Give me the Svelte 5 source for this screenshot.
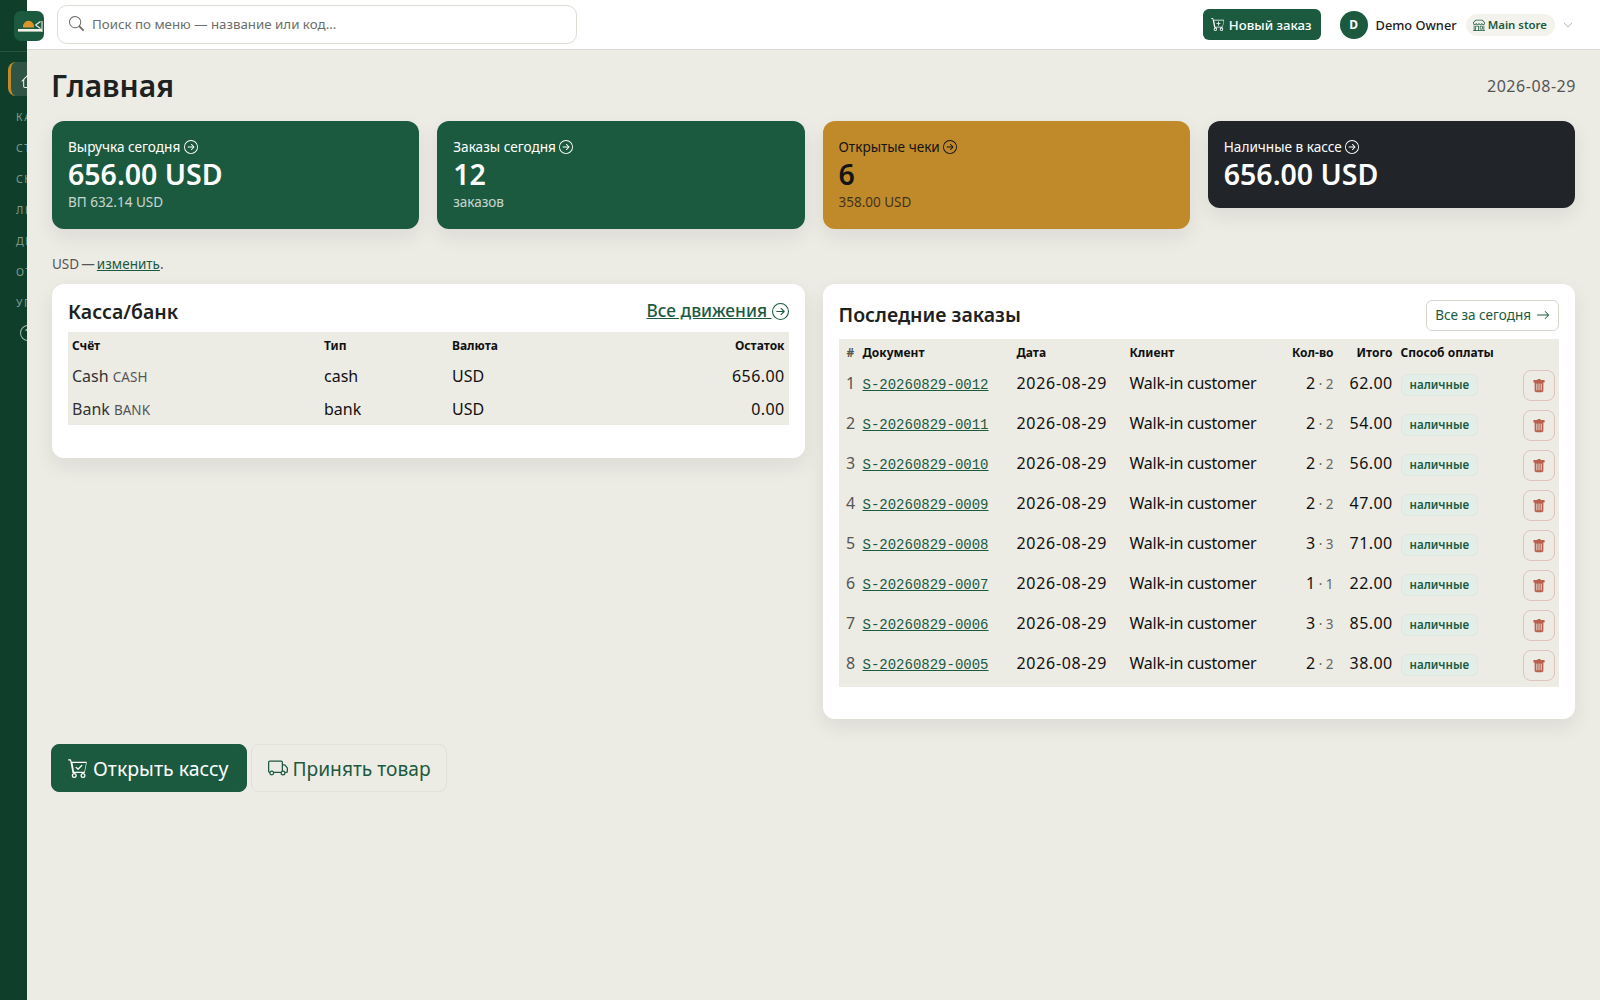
<script>
  const icons = {
    circleArrow: "M1 8a7 7 0 1 0 14 0A7 7 0 0 0 1 8m15 0A8 8 0 1 1 0 8a8 8 0 0 1 16 0M4.5 7.5a.5.5 0 0 0 0 1h5.793l-2.147 2.146a.5.5 0 0 0 .708.708l3-3a.5.5 0 0 0 0-.708l-3-3a.5.5 0 1 0-.708.708L10.293 7.5z",
    search: "M11.742 10.344a6.5 6.5 0 1 0-1.397 1.398h-.001q.044.06.098.115l3.85 3.85a1 1 0 0 0 1.415-1.414l-3.85-3.85a1 1 0 0 0-.115-.1zM12 6.5a5.5 5.5 0 1 1-11 0 5.5 5.5 0 0 1 11 0",
    cartPlus: "M9 5.5a.5.5 0 0 0-1 0V7H6.5a.5.5 0 0 0 0 1H8v1.5a.5.5 0 0 0 1 0V8h1.5a.5.5 0 0 0 0-1H9zM.5 1a.5.5 0 0 0 0 1h1.11l.401 1.607 1.498 7.985A.5.5 0 0 0 4 12h1a2 2 0 1 0 0 4 2 2 0 0 0 0-4h7a2 2 0 1 0 0 4 2 2 0 0 0 0-4h1a.5.5 0 0 0 .491-.408l1.5-8A.5.5 0 0 0 14.5 3H2.89l-.405-1.621A.5.5 0 0 0 2 1zm3.102 3h10.796l-1.313 7h-8.17zM5 13a1 1 0 1 1 0 2 1 1 0 0 1 0-2m7 0a1 1 0 1 1 0 2 1 1 0 0 1 0-2",
    cartCheck: "M11.354 6.354a.5.5 0 0 0-.708-.708L8 8.293 6.854 7.146a.5.5 0 1 0-.708.708l1.5 1.5a.5.5 0 0 0 .708 0zM.5 1a.5.5 0 0 0 0 1h1.11l.401 1.607 1.498 7.985A.5.5 0 0 0 4 12h1a2 2 0 1 0 0 4 2 2 0 0 0 0-4h7a2 2 0 1 0 0 4 2 2 0 0 0 0-4h1a.5.5 0 0 0 .491-.408l1.5-8A.5.5 0 0 0 14.5 3H2.89l-.405-1.621A.5.5 0 0 0 2 1zm3.102 3h10.796l-1.313 7h-8.17zM5 13a1 1 0 1 1 0 2 1 1 0 0 1 0-2m7 0a1 1 0 1 1 0 2 1 1 0 0 1 0-2",
    truck: "M0 3.5A1.5 1.5 0 0 1 1.5 2h9A1.5 1.5 0 0 1 12 3.5V5h1.02a1.5 1.5 0 0 1 1.17.563l1.481 1.85a1.5 1.5 0 0 1 .329.938V10.5a1.5 1.5 0 0 1-1.5 1.5H14a2 2 0 1 1-4 0H5a2 2 0 1 1-3.998-.085A1.5 1.5 0 0 1 0 10.5zm1.294 7.456A2 2 0 0 1 4.732 11h5.536a2 2 0 0 1 .732-.732V3.5a.5.5 0 0 0-.5-.5h-9a.5.5 0 0 0-.5.5v7a.5.5 0 0 0 .294.456M12 10a2 2 0 0 1 1.732 1h.768a.5.5 0 0 0 .5-.5V8.35a.5.5 0 0 0-.11-.312l-1.48-1.85A.5.5 0 0 0 13.02 6H12zm-9 1a1 1 0 1 0 0 2 1 1 0 0 0 0-2m9 0a1 1 0 1 0 0 2 1 1 0 0 0 0-2",
    trash: "M2.5 1a1 1 0 0 0-1 1v1a1 1 0 0 0 1 1H3v9a2 2 0 0 0 2 2h6a2 2 0 0 0 2-2V4h.5a1 1 0 0 0 1-1V2a1 1 0 0 0-1-1H10a1 1 0 0 0-1-1H7a1 1 0 0 0-1 1zm3 4a.5.5 0 0 1 .5.5v7a.5.5 0 0 1-1 0v-7a.5.5 0 0 1 .5-.5M8 5a.5.5 0 0 1 .5.5v7a.5.5 0 0 1-1 0v-7A.5.5 0 0 1 8 5m3 .5v7a.5.5 0 0 1-1 0v-7a.5.5 0 0 1 1 0",
    chevron: "M1.646 4.646a.5.5 0 0 1 .708 0L8 10.293l5.646-5.647a.5.5 0 0 1 .708.708l-6 6a.5.5 0 0 1-.708 0l-6-6a.5.5 0 0 1 0-.708",
    house: "M8.707 1.5a1 1 0 0 0-1.414 0L.646 8.146a.5.5 0 0 0 .708.708L2 8.207V13.5A1.5 1.5 0 0 0 3.5 15h9a1.5 1.5 0 0 0 1.5-1.5V8.207l.646.647a.5.5 0 0 0 .708-.708L13 5.793V2.5a.5.5 0 0 0-.5-.5h-1a.5.5 0 0 0-.5.5v1.293zM13 7.207V13.5a.5.5 0 0 1-.5.5h-9a.5.5 0 0 1-.5-.5V7.207l5-5z",
    question: "M8 15A7 7 0 1 1 8 1a7 7 0 0 1 0 14m0 1A8 8 0 1 0 8 0a8 8 0 0 0 0 16M5.255 5.786a.237.237 0 0 0 .241.247h.825c.138 0 .248-.113.266-.25.09-.656.54-1.134 1.342-1.134.686 0 1.314.343 1.314 1.168 0 .635-.374.927-.965 1.371-.673.489-1.206 1.06-1.168 1.987l.003.217a.25.25 0 0 0 .25.246h.811a.25.25 0 0 0 .25-.25v-.105c0-.718.273-.927 1.01-1.486.609-.463 1.244-.977 1.244-2.056 0-1.511-1.276-2.241-2.673-2.241-1.267 0-2.655.59-2.75 2.286m1.557 5.763c0 .533.425.927 1.01.927.609 0 1.028-.394 1.028-.927 0-.552-.42-.94-1.029-.94-.584 0-1.009.388-1.009.94",
    shop: "M2.97 1.35A1 1 0 0 1 3.73 1h8.54a1 1 0 0 1 .76.35l2.609 3.044A1.5 1.5 0 0 1 16 5.37v.255a2.375 2.375 0 0 1-4.25 1.458A2.37 2.37 0 0 1 9.875 8 2.37 2.37 0 0 1 8 7.083 2.37 2.37 0 0 1 6.125 8a2.37 2.37 0 0 1-1.875-.917A2.375 2.375 0 0 1 0 5.625V5.37a1.5 1.5 0 0 1 .361-.976zm1.78 4.275a1.375 1.375 0 0 0 2.75 0 .5.5 0 0 1 1 0 1.375 1.375 0 0 0 2.75 0 .5.5 0 0 1 1 0 1.375 1.375 0 1 0 2.75 0V5.37a.5.5 0 0 0-.12-.325L12.27 2H3.73L1.12 5.045A.5.5 0 0 0 1 5.37v.255a1.375 1.375 0 0 0 2.75 0 .5.5 0 0 1 1 0M1.5 8.5A.5.5 0 0 1 2 9v6h1v-5a1 1 0 0 1 1-1h3a1 1 0 0 1 1 1v5h6V9a.5.5 0 0 1 1 0v6h.5a.5.5 0 0 1 0 1H.5a.5.5 0 0 1 0-1H1V9a.5.5 0 0 1 .5-.5M4 15h3v-5H4zm5-5a1 1 0 0 1 1-1h2a1 1 0 0 1 1 1v3a1 1 0 0 1-1 1h-2a1 1 0 0 1-1-1zm3 0h-2v3h2z",
    arrow: "M1 8a.5.5 0 0 1 .5-.5h11.793l-3.147-3.146a.5.5 0 0 1 .708-.708l4 4a.5.5 0 0 1 0 .708l-4 4a.5.5 0 0 1-.708-.708L13.293 8.5H1.5A.5.5 0 0 1 1 8"
  };

  const navGroups = ["КА", "СТ", "СК", "ЛЮ", "ДЕ", "ОТ", "УП"];

  const stats = [
    { label: "Выручка сегодня", value: "656.00 USD", sub: "ВП 632.14 USD", tone: "green" },
    { label: "Заказы сегодня", value: "12", sub: "заказов", tone: "green" },
    { label: "Открытые чеки", value: "6", sub: "358.00 USD", tone: "amber" },
    { label: "Наличные в кассе", value: "656.00 USD", sub: "", tone: "dark" }
  ];

  const accounts = [
    { name: "Cash", code: "CASH", type: "cash", currency: "USD", balance: "656.00" },
    { name: "Bank", code: "BANK", type: "bank", currency: "USD", balance: "0.00" }
  ];

  const orders = [
    { doc: "S-20260829-0012", qty: 2, lines: 2, total: "62.00" },
    { doc: "S-20260829-0011", qty: 2, lines: 2, total: "54.00" },
    { doc: "S-20260829-0010", qty: 2, lines: 2, total: "56.00" },
    { doc: "S-20260829-0009", qty: 2, lines: 2, total: "47.00" },
    { doc: "S-20260829-0008", qty: 3, lines: 3, total: "71.00" },
    { doc: "S-20260829-0007", qty: 1, lines: 1, total: "22.00" },
    { doc: "S-20260829-0006", qty: 3, lines: 3, total: "85.00" },
    { doc: "S-20260829-0005", qty: 2, lines: 2, total: "38.00" }
  ];
</script>

{#snippet icon(d, size)}
  <svg class="icon" width={size} height={size} viewBox="0 0 16 16" fill="currentColor"><path {d} /></svg>
{/snippet}

<div class="app">
  <aside class="sidebar">
    <div class="side-top"></div>
    <nav class="nav">
      <div class="nav-active">{@render icon(icons.house, 17)}</div>
      {#each navGroups as group}
        <div class="nav-group">{group}</div>
      {/each}
      <div class="nav-help">{@render icon(icons.question, 16)}</div>
    </nav>
  </aside>

  <!-- logo sits over the sidebar edge -->
  <div class="logo">
    <svg width="30" height="30" viewBox="0 0 30 30">
      <path d="M9 16.5a5.6 5.6 0 1 1 11 0z" fill="#d9962f" />
      <rect x="4" y="18" width="24" height="2.6" fill="#f4f1e6" />
      <path d="M21.5 14 L26.5 10.5 M21.5 14 L26.5 17.5 M28 10 V21" fill="none" stroke="#f4f1e6" stroke-width="1.1" />
    </svg>
  </div>

  <div class="main">
    <header class="topbar">
      <div class="search">
        <span class="search-icon">{@render icon(icons.search, 15)}</span>
        <span class="search-text">Поиск по меню — название или код...</span>
      </div>
      <div class="top-right">
        <button class="btn-new">{@render icon(icons.cartPlus, 14)} Новый заказ</button>
        <span class="avatar">D</span>
        <span class="user">Demo Owner</span>
        <span class="store">{@render icon(icons.shop, 12)} Main store</span>
        <span class="chev">{@render icon(icons.chevron, 10)}</span>
      </div>
    </header>

    <main class="content">
      <div class="title-row">
        <h1>Главная</h1>
        <span class="date">2026-08-29</span>
      </div>

      <section class="stats">
        {#each stats as s}
          <div class="stat {s.tone}">
            <div class="stat-label">{s.label} {@render icon(icons.circleArrow, 14)}</div>
            <div class="stat-value">{s.value}</div>
            {#if s.sub}<div class="stat-sub">{s.sub}</div>{/if}
          </div>
        {/each}
      </section>

      <p class="currency">USD — <a href="#top">изменить</a>.</p>

      <section class="panels">
        <div class="panel left">
          <div class="panel-head">
            <h2>Касса/банк</h2>
            <a class="all-link" href="#top"><u>Все движения&nbsp;</u>{@render icon(icons.circleArrow, 17)}</a>
          </div>
          <table class="accounts">
            <thead>
              <tr><th class="c1">Счёт</th><th class="c2">Тип</th><th>Валюта</th><th class="num">Остаток</th></tr>
            </thead>
            <tbody>
              {#each accounts as a}
                <tr>
                  <td class="acc">{a.name} <small>{a.code}</small></td>
                  <td>{a.type}</td>
                  <td>{a.currency}</td>
                  <td class="num figures">{a.balance}</td>
                </tr>
              {/each}
            </tbody>
          </table>
        </div>

        <div class="panel right">
          <div class="panel-head second">
            <h2>Последние заказы</h2>
            <a class="btn-outline" href="#top">Все за сегодня {@render icon(icons.arrow, 14)}</a>
          </div>
          <table class="orders">
            <thead>
              <tr>
                <th class="idx">#</th>
                <th class="doc">Документ</th>
                <th class="dt">Дата</th>
                <th class="cust">Клиент</th>
                <th class="num qty">Кол-во</th>
                <th class="num tot">Итого</th>
                <th class="pay">Способ оплаты</th>
                <th></th>
              </tr>
            </thead>
            <tbody>
              {#each orders as o, i}
                <tr>
                  <td class="idx">{i + 1}</td>
                  <td><a class="doc-link" href="#top">{o.doc}</a></td>
                  <td class="figures wide">2026-08-29</td>
                  <td class="customer">Walk-in customer</td>
                  <td class="num">{o.qty}<span class="lines">&nbsp;· {o.lines}</span></td>
                  <td class="num figures">{o.total}</td>
                  <td><span class="badge">наличные</span></td>
                  <td class="del-cell"><button class="del">{@render icon(icons.trash, 14)}</button></td>
                </tr>
              {/each}
            </tbody>
          </table>
        </div>
      </section>

      <div class="actions">
        <button class="btn-lg primary">{@render icon(icons.cartCheck, 20)} Открыть кассу</button>
        <button class="btn-lg ghost">{@render icon(icons.truck, 20)} Принять товар</button>
      </div>
    </main>
  </div>
</div>

<style>
  :global(body) {
    margin: 0;
    background: #ecebe4;
    font-family: "Noto Sans", "Liberation Sans", sans-serif;
    color: #1d2120;
  }

  .app {
    display: flex;
    min-height: 1000px;
    position: relative;
  }

  .icon {
    display: inline-block;
    vertical-align: -0.15em;
    flex: none;
  }

  .sidebar {
    width: 27px;
    flex: none;
    background: #0f3f2b;
    overflow: hidden;
  }
  .side-top {
    height: 52px;
    border-bottom: 1px solid #28533f;
    box-sizing: border-box;
  }
  .nav {
    padding: 10px 0 0 8px;
  }
  .nav-active {
    width: 40px;
    height: 34px;
    box-sizing: border-box;
    background: #2f5443;
    border-left: 3px solid #c08a2b;
    border-radius: 8px;
    color: #f0efe8;
    padding: 8px 0 0 10px;
    margin-bottom: 14px;
  }
  .nav-group {
    margin-left: 8px;
    height: 31px;
    line-height: 15px;
    font-size: 10.5px;
    letter-spacing: 1.6px;
    color: #849c8f;
    white-space: nowrap;
  }
  .nav-help {
    margin-left: 12px;
    margin-top: -5px;
    color: #a8bbb0;
  }

  .logo {
    position: absolute;
    left: 14px;
    top: 11px;
    width: 30px;
    height: 30px;
    border-radius: 7px;
    background: #1c5a3f;
    z-index: 2;
  }

  .main {
    flex: 1;
    min-width: 0;
  }

  .topbar {
    height: 50px;
    box-sizing: border-box;
    background: #fff;
    border-bottom: 1px solid #dcdbd3;
    display: flex;
    align-items: center;
    justify-content: space-between;
    padding: 0 27px 0 30px;
  }
  .search {
    width: 520px;
    height: 39px;
    box-sizing: border-box;
    border: 1px solid #dedcd4;
    border-radius: 10px;
    display: flex;
    align-items: center;
    gap: 8px;
    padding: 0 11px 1px;
    margin-top: -1px;
    color: #6b6f6b;
    font-size: 13.3px;
  }
  .search-icon {
    display: flex;
  }
  .top-right {
    display: flex;
    align-items: center;
  }
  .btn-new {
    height: 31px;
    width: 118px;
    padding: 0;
    border: 0;
    border-radius: 6px;
    background: #1c5a3f;
    color: #fff;
    font: 500 13.2px "Noto Sans", sans-serif;
    margin-right: 19px;
  }
  .avatar {
    width: 28px;
    height: 28px;
    border-radius: 50%;
    background: #1c5a3f;
    color: #fff;
    font-size: 12px;
    font-weight: 700;
    display: flex;
    align-items: center;
    justify-content: center;
    margin-right: 8px;
  }
  .user {
    font-size: 12.8px;
    font-weight: 500;
    margin-right: 9px;
  }
  .store {
    height: 22px;
    padding: 0 8px 0 7px;
    border-radius: 11px;
    background: #f3f2ec;
    color: #1c5a3f;
    font-size: 11.4px;
    font-weight: 600;
    display: flex;
    align-items: center;
    gap: 3px;
    margin-right: 8px;
  }
  .chev {
    color: #8c8f8a;
    display: flex;
  }

  .content {
    padding: 0 25px;
  }
  .title-row {
    display: flex;
    justify-content: space-between;
    align-items: center;
    height: 71px;
  }
  h1 {
    margin: 0 0 0 -1px;
    font-size: 30px;
    font-weight: 600;
  }
  .date {
    color: #555;
    font-size: 16px;
    letter-spacing: 0.55px;
    margin-right: -1px;
  }

  .stats {
    display: grid;
    grid-template-columns: repeat(4, 1fr);
    gap: 18px;
    align-items: start;
  }
  .stat {
    border-radius: 12px;
    padding: 17px 16px 15px;
    color: #fff;
    box-shadow: 0 8px 20px rgba(30, 40, 30, 0.08);
  }
  .stat.green { background: #1c5a3f; }
  .stat.amber { background: #c08a2b; color: #141414; }
  .stat.dark { background: #212529; }
  .stat-label {
    font-size: 13.6px;
    line-height: 18px;
    height: 18px;
  }
  .stat-value {
    font-size: 28.5px;
    font-weight: 600;
    line-height: 37px;
  }
  .stat-sub {
    font-size: 13.5px;
    line-height: 21px;
    margin: -1px 0 1px;
    opacity: 0.75;
  }

  .currency {
    margin: 25px 0 10px;
    font-size: 13.5px;
    line-height: 20px;
    color: #555;
    word-spacing: -1.4px;
  }
  .currency a {
    color: #1c5a3f;
  }

  .panels {
    display: grid;
    grid-template-columns: 1fr 1fr;
    gap: 18px;
    align-items: start;
  }
  .panel {
    background: #fff;
    border-radius: 12px;
    padding: 16px;
    box-shadow: 0 8px 20px rgba(30, 40, 30, 0.08);
  }
  .panel.left { padding-bottom: 33px; }
  .panel.right { padding-bottom: 32px; }
  .panel-head {
    display: flex;
    justify-content: space-between;
    align-items: flex-start;
    height: 32px;
  }
  .panel-head.second {
    height: 39px;
  }
  h2 {
    margin: 0;
    font-size: 19.5px;
    font-weight: 600;
    line-height: 24px;
  }
  .second h2 {
    line-height: 30px;
  }
  .all-link {
    color: #1c5a3f;
    font-size: 17.3px;
    font-weight: 500;
    line-height: 22px;
    text-decoration: none;
    display: flex;
    align-items: center;
  }
  .btn-outline {
    height: 31px;
    box-sizing: border-box;
    padding: 0 8px 1px;
    border: 1px solid #d5d5cd;
    border-radius: 6px;
    color: #1c5a3f;
    font-size: 13.5px;
    text-decoration: none;
    display: flex;
    align-items: center;
    gap: 5px;
  }

  table {
    width: 100%;
    border-collapse: collapse;
    background: #ecebe4;
    table-layout: fixed;
  }
  th {
    font-size: 12px;
    font-weight: 700;
    text-align: left;
    color: #111;
    padding: 0 4px;
  }
  td {
    font-size: 16px;
    padding: 0 4px;
    color: #111;
    white-space: nowrap;
  }
  .num { text-align: right; }
  .figures { letter-spacing: 0.4px; }
  .figures.wide { letter-spacing: 0.7px; }
  .customer { letter-spacing: -0.25px; }

  .accounts thead tr { height: 27px; }
  .accounts tbody tr { height: 33px; }
  .accounts .c1 { width: 244px; }
  .accounts .c2 { width: 120px; }
  .acc { color: #333; }
  .acc small {
    font-size: 13.5px;
    color: #555;
  }

  .orders thead tr { height: 28px; }
  .orders th { padding-bottom: 2px; }
  .orders tbody tr { height: 40px; }
  .orders tbody td {
    vertical-align: top;
    padding-top: 4px;
    line-height: 24px;
  }
  .orders th.idx { width: 12px; color: #555; text-align: center; padding-left: 6px; padding-right: 2px; }
  .orders td.idx { color: #555; text-align: center; padding-left: 6px; padding-right: 2px; }
  .orders th.doc { width: 146px; }
  .orders th.dt { width: 105px; }
  .orders th.cust { width: 136px; }
  .orders th.qty { width: 60px; }
  .orders th.tot { width: 51px; }
  .orders th.pay { width: 105px; }
  .doc-link {
    font: 14px "Liberation Mono", monospace;
    color: #1c5a3f;
  }
  .lines {
    font-size: 13.5px;
    color: #666;
  }
  .badge {
    display: inline-block;
    padding: 2px 8px;
    border: 1px solid #dce8e0;
    border-radius: 6px;
    background: #e3eee8;
    color: #1c5a3f;
    font-size: 11.6px;
    font-weight: 600;
    line-height: 16px;
    vertical-align: top;
    margin-top: 3px;
  }
  .orders td.del-cell {
    text-align: right;
    line-height: 0;
    padding-top: 3px;
  }
  .del {
    width: 32px;
    height: 31px;
    padding: 0;
    border: 1px solid #e0c4bc;
    border-radius: 8px;
    background: transparent;
    color: #b9604f;
    display: inline-flex;
    align-items: center;
    justify-content: center;
  }

  .actions {
    display: flex;
    gap: 4px;
    margin: 25px 0 0 -1px;
  }
  .btn-lg {
    height: 48px;
    border-radius: 8px;
    font: 400 19.5px "Noto Sans", sans-serif;
    display: flex;
    align-items: center;
    gap: 5px;
  }
  .primary {
    padding: 0 18px 0 16px;
    background: #1c5a3f;
    border: 1px solid #1c5a3f;
    color: #fff;
  }
  .ghost {
    padding: 0 15px 0 16px;
    gap: 4px;
    font-size: 19.2px;
    background: transparent;
    border: 1px solid #dfe2d9;
    color: #1c5a3f;
  }
</style>
